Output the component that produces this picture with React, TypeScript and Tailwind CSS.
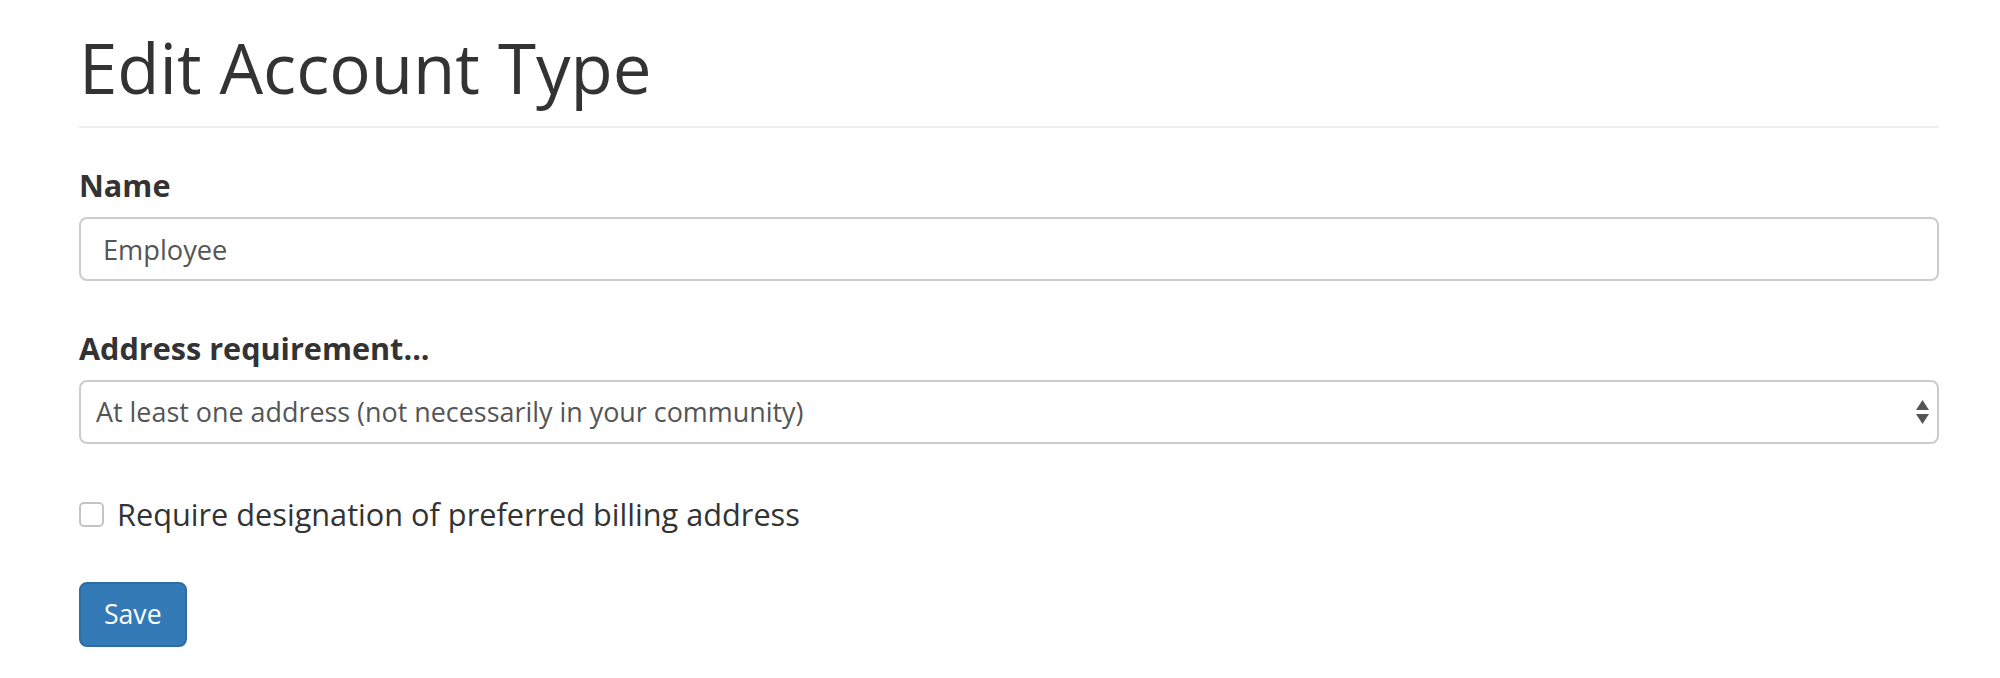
export default function App() {
  const font = { fontFamily: '"Open Sans", "Noto Sans", sans-serif' }
  return (
    <div className="min-h-screen bg-white text-[#333]" style={font}>
      <div className="ml-[79px] mr-[61px] pt-[29px]">
        {/* Header */}
        <h1 className="text-[69px] leading-[77px] font-normal pb-[20px] border-b-2 border-[#eee]">
          Edit Account Type
        </h1>

        <form className="mt-[40px]">
          {/* Name */}
          <label className="block text-[30.6px] leading-[35px] font-bold mb-[14px]">Name</label>
          <input
            type="text"
            defaultValue="Employee"
            className="block w-full h-[64px] px-[22px] text-[27.2px] text-[#555] bg-white border-2 border-[#ccc] rounded-[8px] outline-none"
          />

          {/* Address requirement */}
          <label className="block text-[30.6px] leading-[35px] font-bold mt-[50px] mb-[14px]">
            Address requirement...
          </label>
          <div className="relative">
            <div className="flex items-center w-full h-[64px] pl-[15px] pr-[40px] text-[26.9px] text-[#555] bg-white border-2 border-[#ccc] rounded-[8px]">
              At least one address (not necessarily in your community)
            </div>
            <svg
              className="absolute right-[9px] top-1/2 -translate-y-1/2"
              width="15"
              height="26"
              viewBox="0 0 15 26"
            >
              <path d="M7.5 1 L14 11 L1 11 Z" fill="#555" />
              <path d="M1 15 L14 15 L7.5 25 Z" fill="#555" />
            </svg>
          </div>

          {/* Checkbox */}
          <label className="flex items-center gap-[13px] mt-[51px] text-[30.7px] leading-[38px]">
            <span className="w-[25px] h-[25px] border-2 border-[#c4c4c4] rounded-[5px] bg-white shrink-0" />
            Require designation of preferred billing address
          </label>

          {/* Save */}
          <button
            type="button"
            className="mt-[49px] h-[65px] px-[23px] text-[26.6px] text-white bg-[#337ab7] border-2 border-[#2e6da4] rounded-[8px]"
          >
            Save
          </button>
        </form>
      </div>
    </div>
  )
}
